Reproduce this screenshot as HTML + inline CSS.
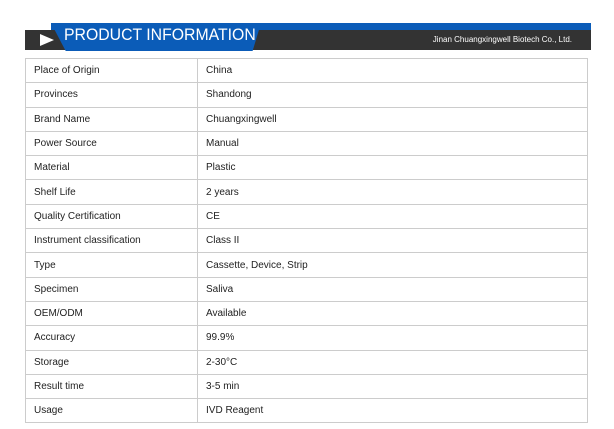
<!DOCTYPE html><html><head><style>
body{margin:0;width:614px;height:429px;background:#fff;font-family:"Liberation Sans",sans-serif;position:relative;overflow:hidden}
.dark{position:absolute;left:25px;top:30px;width:566px;height:20px;background:#333}
.blue{position:absolute;left:51px;top:23px;width:540px;height:7px;background:#0b5cb8}
.par{position:absolute;left:51px;top:23px;width:210px;height:28px;background:#0b5cb8;clip-path:polygon(0 0,100% 0,96% 100%,7% 100%)}
.title{position:absolute;left:64px;top:25px;color:#fff;font-size:17px;transform:scaleX(0.93);transform-origin:left;white-space:nowrap}
.arr{position:absolute;left:40px;top:34px;width:0;height:0;border-left:14px solid #fff;border-top:6px solid transparent;border-bottom:6px solid transparent}
.co{position:absolute;right:42px;top:35px;color:#fff;font-size:8px}
table{position:absolute;left:25px;top:58px;width:563px;border-collapse:collapse;font-size:10px;color:#222}
td{border:1px solid #ccc;height:23.3px;padding:0 0 0 8px}
td:first-child{width:163px}
</style></head><body>
<div class="dark"></div><div class="blue"></div><div class="par"></div>
<div class="arr"></div><div class="title">PRODUCT INFORMATION</div>
<div class="co">Jinan Chuangxingwell Biotech Co., Ltd.</div>
<table>
<tr><td>Place of Origin</td><td>China</td></tr>
<tr><td>Provinces</td><td>Shandong</td></tr>
<tr><td>Brand Name</td><td>Chuangxingwell</td></tr>
<tr><td>Power Source</td><td>Manual</td></tr>
<tr><td>Material</td><td>Plastic</td></tr>
<tr><td>Shelf Life</td><td>2 years</td></tr>
<tr><td>Quality Certification</td><td>CE</td></tr>
<tr><td>Instrument classification</td><td>Class II</td></tr>
<tr><td>Type</td><td>Cassette, Device, Strip</td></tr>
<tr><td>Specimen</td><td>Saliva</td></tr>
<tr><td>OEM/ODM</td><td>Available</td></tr>
<tr><td>Accuracy</td><td>99.9%</td></tr>
<tr><td>Storage</td><td>2-30°C</td></tr>
<tr><td>Result time</td><td>3-5 min</td></tr>
<tr><td>Usage</td><td>IVD Reagent</td></tr>
</table>
</body></html>
